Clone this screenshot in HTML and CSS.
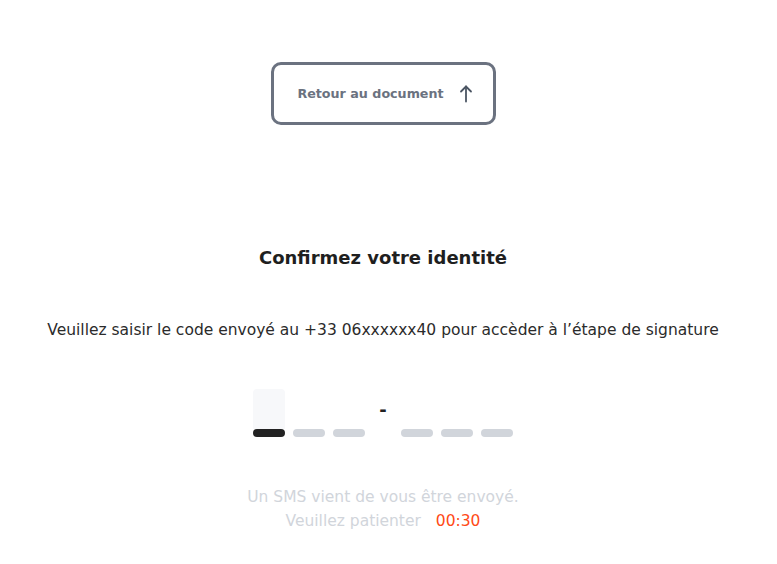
FILE: index.html
```html
<!DOCTYPE html>
<html lang="fr">
<head>
  <meta charset="UTF-8">
  <meta name="viewport" content="width=device-width, initial-scale=1.0">
  <title>Confirmez votre identité</title>
  <link rel="stylesheet" href="styles.css">
</head>
<body>

  <div class="container">
    <!-- Retour -->
    <button class="back-btn" type="button">
      Retour au document
      <svg class="back-icon" width="14" height="18" viewBox="0 0 14 18" fill="none" stroke="currentColor" stroke-width="1.8" stroke-linecap="round" stroke-linejoin="round">
        <path d="M7 16.5V1.5"/>
        <path d="M2 6.5L7 1.5L12 6.5"/>
      </svg>
    </button>

    <h1>Confirmez votre identité</h1>

    <p class="intro">Veuillez saisir le code envoyé au +33 06xxxxxx40 pour accèder à l’étape de signature</p>

    <!-- Saisie du code -->
    <div class="code">
      <div class="code-group">
        <div class="digit active"><span class="digit-box"></span><span class="bar"></span></div>
        <div class="digit"><span class="digit-box"></span><span class="bar"></span></div>
        <div class="digit"><span class="digit-box"></span><span class="bar"></span></div>
      </div>
      <span class="sep">-</span>
      <div class="code-group">
        <div class="digit"><span class="digit-box"></span><span class="bar"></span></div>
        <div class="digit"><span class="digit-box"></span><span class="bar"></span></div>
        <div class="digit"><span class="digit-box"></span><span class="bar"></span></div>
      </div>
    </div>

    <p class="note">Un SMS vient de vous être envoyé.<br>Veuillez patienter <span class="timer">00:30</span></p>
  </div>

</body>
</html>
```

FILE: styles.css
```css
body {
  font-family: "DejaVu Sans", sans-serif;
  background-color: #fff;
  margin: 0;
  padding: 0;
}

.container {
  width: 766px;
  display: flex;
  flex-direction: column;
  align-items: center;
  padding-top: 62px;
}

.back-btn {
  display: flex;
  align-items: center;
  gap: 15px;
  width: 225px;
  height: 63px;
  box-sizing: border-box;
  justify-content: center;
  background: #fff;
  border: 3px solid #6b7280;
  border-radius: 10px;
  color: #6b7280;
  font-family: inherit;
  font-size: 12.7px;
  font-weight: 600;
  padding: 0 0 0 4px;
  cursor: pointer;
}

.back-icon {
  display: block;
  color: #4b5563;
}

h1 {
  margin: 117px 0 0;
  font-size: 18px;
  font-weight: 600;
  color: #1f1f1f;
  line-height: 32px;
}

.intro {
  margin: 44px 0 0;
  font-size: 15.5px;
  color: #2b2b2b;
  line-height: 24px;
}

.code {
  display: flex;
  align-items: flex-end;
  gap: 8px;
  margin-top: 47px;
}

.code-group {
  display: flex;
  gap: 8px;
}

.digit {
  display: flex;
  flex-direction: column;
  width: 32px;
}

.digit-box {
  height: 40px;
  border-radius: 4px 4px 0 0;
}

.digit.active .digit-box {
  background-color: #f7f8fa;
}

.bar {
  height: 8px;
  border-radius: 4px;
  background-color: #d1d5db;
}

.digit.active .bar {
  background-color: #222;
}

.sep {
  width: 20px;
  text-align: center;
  align-self: flex-start;
  margin-top: 10px;
  font-size: 18px;
  font-weight: 600;
  color: #222;
}

.note {
  margin: 48px 0 0;
  text-align: center;
  font-size: 15.5px;
  line-height: 24px;
  color: #d1d5db;
}

.timer {
  margin-left: 10px;
  color: #ff4a17;
}
```
